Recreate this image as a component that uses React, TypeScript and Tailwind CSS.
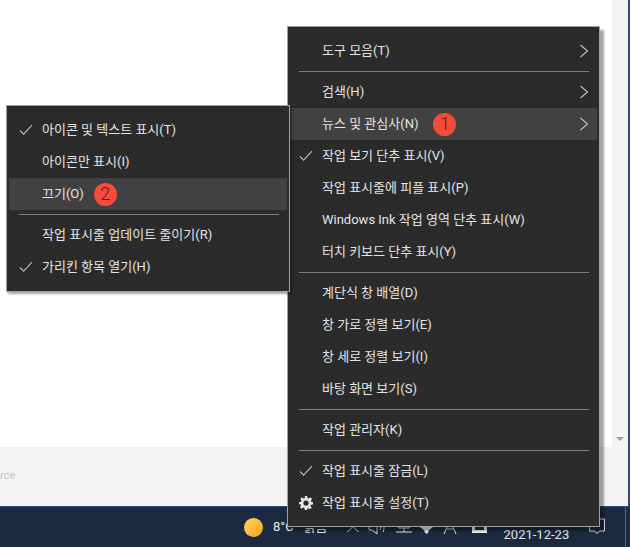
const FONT = "font-['Roboto','Noto_Sans_CJK_KR',sans-serif]";

function Check() {
  return (
    <svg width="14" height="12" viewBox="0 0 14 12" fill="none" stroke="#b8b8b8" strokeWidth="1.1">
      <path d="M1 6.5 L4.6 10.2 L13 1.2" />
    </svg>
  );
}

function Gear() {
  return (
    <svg width="14" height="14" viewBox="0 0 24 24" fill="#e6e6e6" fillRule="evenodd">
      <path d="M10 0h4l.6 3.4 2.2.9L19.6 2.3l2.8 2.8-2 2.8.9 2.2L24 10.6v3.8l-3.4.6-.9 2.2 2 2.8-2.8 2.8-2.8-2-2.2.9L14 24h-4l-.6-3.4-2.2-.9-2.8 2-2.8-2.8 2-2.8-.9-2.2L0 14.4v-3.8l3.4-.6.9-2.2-2-2.8 2.8-2.8 2.8 2 2.2-.9L10 0zM12 7.5a4.5 4.5 0 1 0 0 9 4.5 4.5 0 0 0 0-9z" />
    </svg>
  );
}

function Chevron() {
  return (
    <svg width="10" height="14" viewBox="0 0 10 14" fill="none" stroke="#c4c4c4" strokeWidth="1.1">
      <path d="M1.5 1 L8.5 7 L1.5 13" />
    </svg>
  );
}

function Badge({ n, wide }: { n: string; wide?: boolean }) {
  return (
    <span
      className={`flex h-[23px] w-[23px] items-center justify-center rounded-full bg-[#f44c3c] text-[18px] font-light leading-none text-[#5c1c14] ${
        wide ? "ml-[15px]" : "ml-[10px]"
      }`}
    >
      {n}
    </span>
  );
}

type RowProps = {
  label: string;
  check?: boolean;
  gear?: boolean;
  chevron?: boolean;
  active?: boolean;
  badge?: string;
  wide?: boolean;
};

function Row({ label, check, gear, chevron, active, badge, wide }: RowProps) {
  return (
    <div className={`flex h-[32px] items-center ${active ? "bg-[#414141]" : ""}`}>
      <span className="flex w-[33px] shrink-0 items-center justify-center">
        {check && <Check />}
        {gear && <Gear />}
      </span>
      <span className="whitespace-nowrap text-[13px] text-[#e4e4e4]">{label}</span>
      {badge && <Badge n={badge} wide={wide} />}
      {chevron && (
        <span className="ml-auto mr-[8px] flex">
          <Chevron />
        </span>
      )}
    </div>
  );
}

function Sep() {
  return (
    <div className="flex h-[9px] items-center pl-[10px] pr-[8px]">
      <div className="h-px w-full bg-[#7f7f7f]" />
    </div>
  );
}

function TrayIcons() {
  return (
    <div className="flex items-center">
      <svg className="ml-[19px] mt-[5px]" width="12" height="10" viewBox="0 0 12 10" fill="none" stroke="#e8e8e8" strokeWidth="1">
        <path d="M0.5 7 L6 1.5 L11.5 7" />
      </svg>
      <svg className="ml-[9px]" width="19" height="16" viewBox="0 0 19 16" fill="none" stroke="#e8e8e8" strokeWidth="1">
        <path d="M1 5h3l5-4v14l-5-4H1zM12 5c1 2 1 4 0 6M15 3c1.500 3 1.500 7 0 10" />
      </svg>
      <svg className="ml-[9px]" width="16" height="16" viewBox="0 0 16 16" fill="none" stroke="#e8e8e8" strokeWidth="1">
        <path d="M2.500 1h11v8h-11zM0 13h16M8 9v4" />
      </svg>
      <svg className="ml-[8px]" width="13" height="14" viewBox="0 0 13 14" fill="#f0f0f0">
        <path d="M0 7 L13 7 L8.500 10.500 L8.500 12 L6.500 14 L4.500 12 L4.500 10.500z" />
      </svg>
      <svg className="ml-[10px]" width="14" height="16" viewBox="0 0 14 16" fill="none" stroke="#e8e8e8" strokeWidth="1">
        <path d="M1 15 L7 1 L13 15 M3.500 10h7" />
      </svg>
      <svg className="ml-[15px]" width="15" height="16" viewBox="0 0 15 16" fill="#f4f4f4">
        <path fillRule="evenodd" d="M0 2h15v12H0zM3 6h9v5H3z" />
      </svg>
    </div>
  );
}

export default function App() {
  return (
    <div className={`relative flex h-[547px] w-[630px] flex-col overflow-hidden bg-white ${FONT}`}>
      <div className="flex min-h-0 flex-1">
        <div className="flex min-w-0 flex-1 flex-col">
          <div className="flex-1 bg-white" />
          <div className="flex h-[59px] items-center bg-[#f3f3f3] pb-[1px]">
            <span className="text-[11px] text-[#c4c4c4]">rce</span>
          </div>
        </div>
        <div className="flex w-[16px] flex-col bg-[#f3f3f3]">
          <div className="flex-1" />
          <div className="flex h-[17px] items-center justify-center">
            <div className="h-0 w-0 border-x-[4px] border-t-[4px] border-x-transparent border-t-[#a0a0a0]" />
          </div>
          <div className="h-[59px]" />
        </div>
        <div className="w-[2px] bg-[#2d4a7c]" />
      </div>

      <div className="flex h-[41px] items-center border-t border-t-[#2d4a6c] bg-[#1b2a41] pl-[244px]">
        <div className="mt-[1px] h-[19px] w-[19px] rounded-full bg-gradient-to-br from-[#ffd75a] to-[#f7a21e]" />
        <span className="ml-[10px] text-[13px] text-[#e8e8e8]">8°C</span>
        <span className="ml-[10px] text-[13px] text-[#e8e8e8]">맑음</span>
        <TrayIcons />
        <span className="ml-[17px] mt-[15px] text-[13px] text-[#e8e8e8]">2021-12-23</span>
        <svg className="ml-[20px]" width="16" height="18" viewBox="0 0 16 18" fill="none" stroke="#e8e8e8" strokeWidth="1">
          <path d="M0.500 1h15v12h-5l-2.500 2.500L5.500 13h-5z" />
        </svg>
        <div className="ml-auto mr-[4px] h-full w-px bg-[#56667f]" />
      </div>

      <div className="absolute left-[287px] top-[26px] h-[501px] w-[313px] border border-[#a0a0a0] bg-[#2b2b2b] pt-[8px] pr-[2px] pl-[1px] shadow-[4px_4px_2px_rgba(0,0,0,0.35)]">
        <Row label="도구 모음(T)" chevron />
        <Sep />
        <Row label="검색(H)" chevron />
        <Row label="뉴스 및 관심사(N)" chevron active badge="1" wide />
        <Row label="작업 보기 단추 표시(V)" check />
        <Row label="작업 표시줄에 피플 표시(P)" />
        <Row label="Windows Ink 작업 영역 단추 표시(W)" />
        <Row label="터치 키보드 단추 표시(Y)" />
        <Sep />
        <Row label="계단식 창 배열(D)" />
        <Row label="창 가로 정렬 보기(E)" />
        <Row label="창 세로 정렬 보기(I)" />
        <Row label="바탕 화면 보기(S)" />
        <Sep />
        <Row label="작업 관리자(K)" />
        <Sep />
        <Row label="작업 표시줄 잠금(L)" check />
        <Row label="작업 표시줄 설정(T)" gear />
      </div>

      <div className="absolute left-[6px] top-[105px] h-[187px] w-[284px] border border-[#a0a0a0] bg-[#2b2b2b] pt-[8px] pr-[2px] pl-[2px] shadow-[2px_2px_2px_rgba(0,0,0,0.35)]">
        <Row label="아이콘 및 텍스트 표시(T)" check />
        <Row label="아이콘만 표시(I)" />
        <Row label="끄기(O)" active badge="2" />
        <Sep />
        <Row label="작업 표시줄 업데이트 줄이기(R)" />
        <Row label="가리킨 항목 열기(H)" check />
      </div>
    </div>
  );
}
